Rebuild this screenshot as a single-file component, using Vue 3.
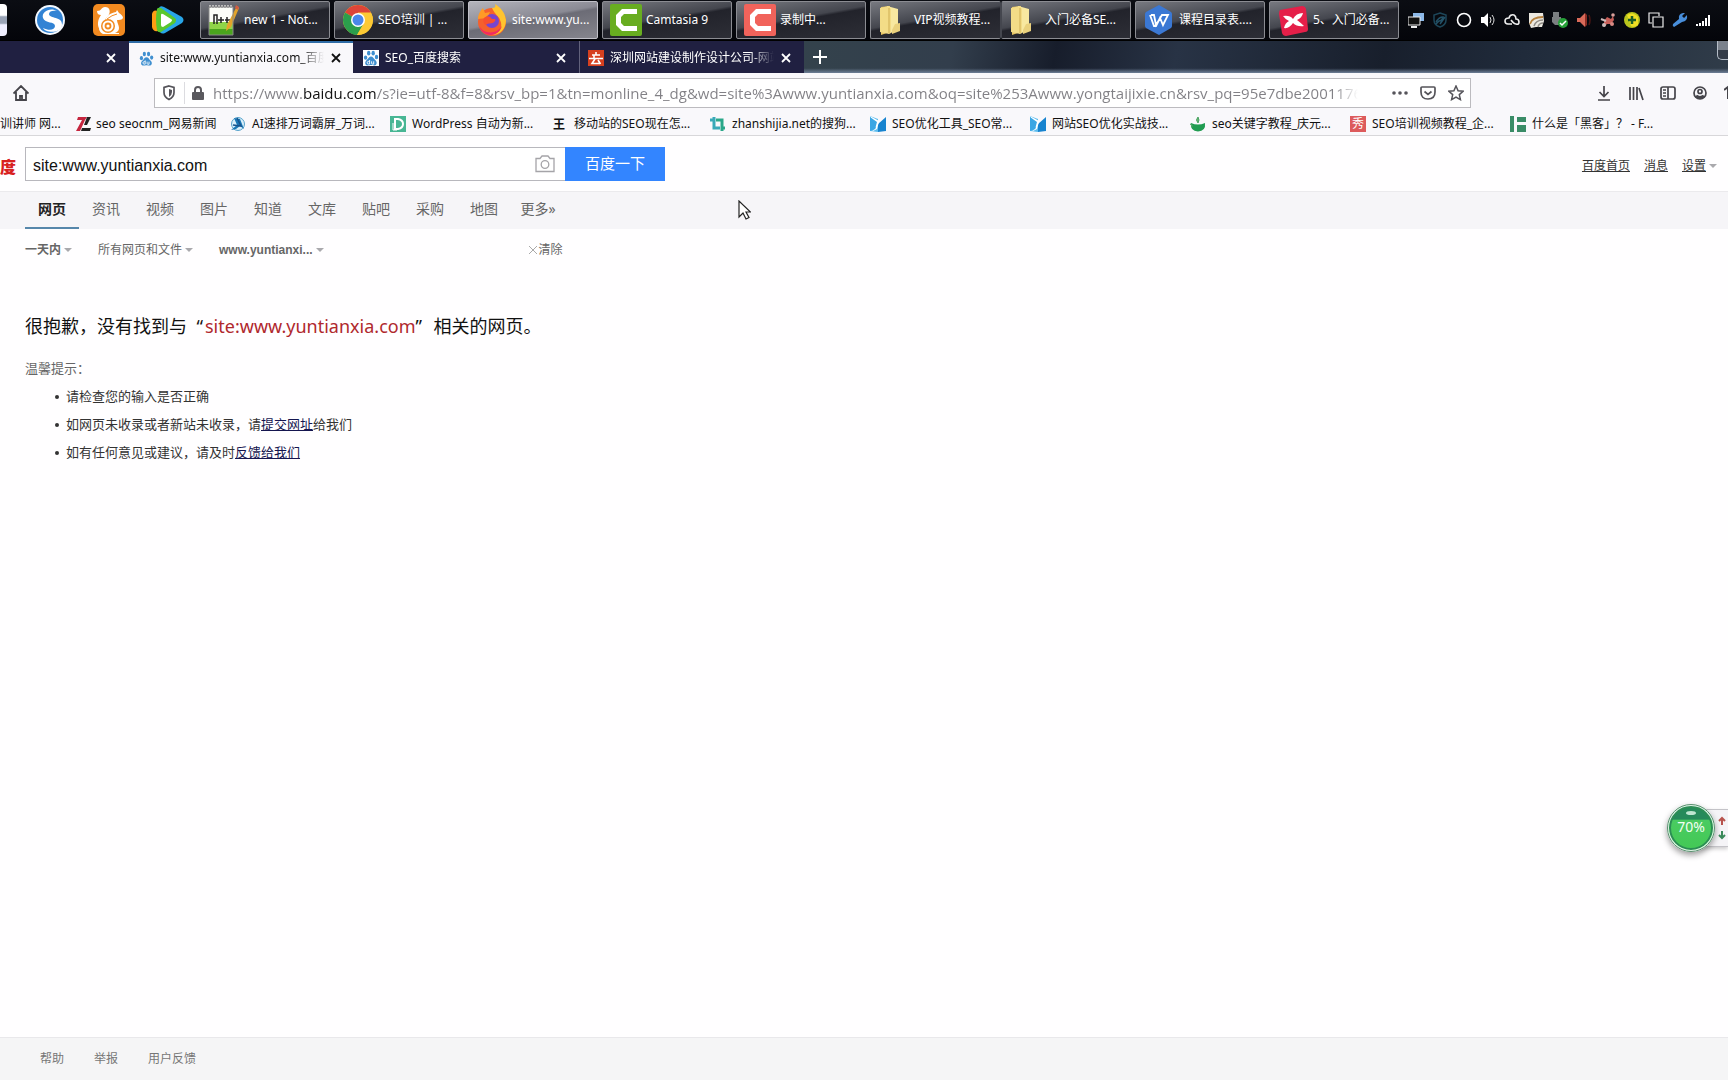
<script setup>
import { ref } from 'vue'

const query = ref('site:www.yuntianxia.com')
const address = ref(
  'https://www.baidu.com/s?ie=utf-8&f=8&rsv_bp=1&tn=monline_4_dg&wd=site%3Awww.yuntianxia.com&oq=site%253Awww.yongtaijixie.cn&rsv_pq=95e7dbe2001176a9&rsv_t'
)

const paw = `
  <ellipse cx="2.6" cy="7.6" rx="1.7" ry="2.2" fill="#3f8fd0"/>
  <ellipse cx="5.7" cy="3.2" rx="1.7" ry="2.4" fill="#3f8fd0"/>
  <ellipse cx="10.2" cy="3.2" rx="1.7" ry="2.4" fill="#3f8fd0"/>
  <ellipse cx="13.5" cy="7" rx="1.7" ry="2.2" fill="#3f8fd0"/>
  <path d="M8 6.6c2 0 2.600 2 4.200 3.400 2.400 2 1.800 5.400-1 5.500-1.400 0-2-.4-3.200-.4s-1.900.4-3.200.4c-3 0-3.400-3.600-1-5.500C5.400 8.600 6 6.600 8 6.600z" fill="#3f8fd0"/>
  <path d="M6.600 10v4H5.400q-1.200-.1-1.200-1.300t1.200-1.300h1.200M8.600 11.300v2q0 .8.800.8h1.300v-2.800" fill="none" stroke="#fff" stroke-width=".9"/>`

const folder = `
  <path d="M3 3l9-1v26l-9 3z" fill="#e6c565"/>
  <path d="M9 2l11 3v19l-7 5-4-2z" fill="#f8e8a0"/>
  <path d="M2 4l9-2 2 3v24l-2 1-9-2z" fill="#f3dc87"/>
  <path d="M11 4v25" stroke="#cfae52"/>
  <path d="M17 20l5-1v8l-8 3v-4z" fill="#ead17d"/>`

const launchers = [
  { name: '搜狗浏览器', art: `
    <circle cx="16" cy="16" r="15" fill="#f4f9ff"/>
    <circle cx="16" cy="16" r="13" fill="#3283d4"/>
    <path d="M23 7C17 3 7 7 9 14c2 6 12 3 12 8 0 4-6 5-12 2 2 5 18 6 19-3 1-9-13-6-13-11 0-3 4-4 8-3z" fill="#fff"/>` },
  { name: 'UC浏览器', art: `
    <rect width="32" height="32" rx="5" fill="#f28a20"/>
    <path d="M4 7c5 0 4-4 8-4 5 0 6 5 3 9-3 3-4 5-3 8l-4 7c-5-5-3-12 0-16-2 0-4-1-4-4z" fill="#fff"/>
    <path d="M12 17c1-5 5-8 11-9l1-2 2 3c2 1 4 3 4 5-1 2-4 2-6 2 0 3 2 5 2 8s-2 4-4 5h4v1H10c-4-2-5-6-3-9" fill="#fff"/>
    <circle cx="15" cy="22" r="7" fill="#f28a20"/><circle cx="15" cy="22" r="5.500" fill="#fff"/>
    <circle cx="15" cy="22" r="2.500" fill="#fff" stroke="#f28a20" stroke-width="1.800"/>
    <path d="M14 15q5-4 10-5" stroke="#f28a20" fill="none"/>` },
  { name: '腾讯视频', art: `
    <path d="M7 4Q8 1 12 3l18 10q3 3 0 6L13 29q-5 2-6-4z" fill="#28a5e8"/>
    <path d="M0 10q1-5 6-3l16 7q3 2 0 5L6 27q-5 1-6-4z" fill="#ff9d13"/>
    <path d="M5 5q1-2 4-1l14 10q2 2 0 5L9 28q-3 1-4-2-2-11 0-21z" fill="#5ac72e"/>
    <path d="M9 11q0-2 2-1l8 5q2 1 0 3l-8 5q-2 0-2-2z" fill="#fff"/>` }
]

const tasks = [
  { label: 'new 1 - Not...', art: `
    <path d="M1 3h24v28H1z" fill="#fbfdf8"/><path d="M1 18h24v13H1z" fill="#8fd448"/><path d="M1 25h24v6H1z" fill="#4aa51d"/>
    <path d="M1 2.500h24" stroke="#bbb" stroke-dasharray="2 1" stroke-width="3"/>
    <path d="M6 20v-9h3v9M13 13v6M10 16h6M19 13v6M17 16h5" fill="none" stroke="#222" stroke-width="1.500"/>
    <path d="M29 2L19 21l-1 6 5-4L31 4z" fill="#e3a42b"/><path d="M28 1l3 2-1 3-3-2z" fill="#d25b42"/>
    <path d="M1 3h24v28H1z" fill="none" stroke="#888"/>` },
  { label: 'SEO培训 | ...', art: `
    <circle cx="16" cy="16" r="15" fill="#fcc934"/>
    <path d="M16 16L3 8.500A15 15 0 0 1 29 8.500H16z" fill="#dd4437"/>
    <path d="M3 8.500A15 15 0 0 0 15 31l7-11.500L16 16z" fill="#2b9e4c"/>
    <path d="M16 9H29A15 15 0 0 1 15 31l7-12z" fill="#fcc934"/>
    <circle cx="16" cy="16" r="7" fill="#fff"/><circle cx="16" cy="16" r="5.500" fill="#4a87ea"/>` },
  { label: 'site:www.yu...', active: true, art: `
    <circle cx="16" cy="18" r="14" fill="#f5602d"/>
    <path d="M16 4C21 4 19 0 19 0c5 3 10 8 11 16 0 9-6 15-14 15 9-2 11-9 8-15-1-4-5-5-8-12z" fill="#ffc42e"/>
    <path d="M2 15C2 9 6 5 7 4l2 5 5-1-3 6z" fill="#ff9a26"/>
    <circle cx="16" cy="17" r="7" fill="#7845ce"/>
    <path d="M8 14c3-3 6-2 8 1 3 0 4 0 3 2-3 4-7 1-9 4-3-1-3-5-2-7z" fill="#f8502f"/>
    <path d="M3 22c4 7 16 10 23 0-4 12-19 12-23 0z" fill="#f22b63"/>` },
  { label: 'Camtasia 9', art: `
    <rect width="32" height="32" rx="2" fill="#68ad20"/>
    <path d="M27 5H12L6 11v10l6 6h15v-5H14l-3-3v-6l3-3h13z" fill="#fff"/>` },
  { label: '录制中...', art: `
    <rect width="32" height="32" rx="2" fill="#f1635b"/>
    <path d="M27 5H12L6 11v10l6 6h15v-5H14l-3-3v-6l3-3h13z" fill="#fff"/>` },
  { label: 'VIP视频教程...', joined: true, art: folder },
  { label: '入门必备SE...', art: folder },
  { label: '课程目录表....', art: `
    <path d="M16 1l12 7q1 1 1 2v12q0 1-1 2l-12 7L3 24q-1-1-1-2V10q0-1 1-2z" fill="#3b78d4"/>
    <path d="M8 11h3l2 10 6-10h6l-5 10-3-7-4 8h-2L7 11" fill="none" stroke="#fff" stroke-width="1.800"/>` },
  { label: '5、入门必备...', art: `
    <path d="M3 6l22-4q3 0 4 3l2 20q0 3-3 3L9 32q-3 0-4-3L2 10q0-3 1-4z" fill="#e51f49"/>
    <path d="M6 12q7-1 10 3 3-6 10-6-1 5-6 7 4 3 7 6-7 1-11-3-4 6-9 5 1-5 5-7-4-2-6-5z" fill="#fff"/>` }
]

const tray = [
  `<path d="M5 1h12v8H5z" fill="#8db9e8"/><path d="M0 5h12v8H0z" fill="#111" stroke="#eee"/><path d="M3 15h6" stroke="#eee" stroke-width="2"/>`,
  `<path d="M8 1l6 2v5q0 5-6 7-6-2-6-7V3z" fill="none" stroke="#1d4659" stroke-width="1.500"/><path d="M4 10q3-5 7-5-1 4-4 4l-3 3M8 12l5-7" fill="none" stroke="#235268" stroke-width="1.500"/>`,
  `<circle cx="8" cy="8" r="6.500" fill="none" stroke="#fff" stroke-width="1.600"/>`,
  `<path d="M1 5h3l4-4v14l-4-4H1z" fill="#fff"/><path d="M10 5q2 3 0 6M12 3q4 5 0 10" fill="none" stroke="#ddd"/>`,
  `<path d="M8 12H4q-3 0-3-3t4-3q1-4 5-3 2 1 2 4 3 0 3 3t-3 2q-2 0-5-4" fill="none" stroke="#eee" stroke-width="1.600"/>`,
  `<path d="M1 1h14l1 8-2 6-6 0-5 1-2-5z" fill="#ebe8df"/><path d="M2 12q2-7 13-7" fill="none" stroke="#b5813d" stroke-width="1.800"/><path d="M6 14q2-6 9-6M10 15q1-4 5-4" fill="none" stroke="#8e8a84" stroke-width="1.500"/>`,
  `<path d="M1 0h6v5h2v8H3l-3-3V5h1z" fill="#7b7f81"/><circle cx="11" cy="11" r="5" fill="#26a038"/><path d="M8 11l2 2 4-4" fill="none" stroke="#fff" stroke-width="1.500"/>`,
  `<path d="M1 6h3l5-5v14l-5-5H1z" fill="#da6a59"/><path d="M9 1l2 2v10l-2 2z" fill="#8c2d24"/><path d="M13 3q2 5 0 10" stroke="#4d1613" stroke-width="1.500" fill="none"/>`,
  `<path d="M4 9l3-4 4 2 2-3 1 4-3 4-4 0-3 3z" fill="#c85f59"/><circle cx="4" cy="13" r="2" fill="#cbb"/><circle cx="12" cy="12" r="2" fill="#d98a84"/><circle cx="13" cy="3" r="1.800" fill="#d9a09b"/><path d="M1 7l5 2" stroke="#cbb" stroke-width="2"/>`,
  `<circle cx="8" cy="8" r="8" fill="#b9c51d"/><path d="M3 3q6-4 11 2v8q-4 3-7 1z" fill="#f0df24"/><path d="M8 4v8M4 8h8" stroke="#1c5f25" stroke-width="2.500"/>`,
  `<path d="M4 11H1V1h10v3M5 5h10v10H5z" fill="none" stroke="#eee" stroke-width="1.200"/>`,
  `<path d="M2 15q-2-1-1-3l6-5q-1-5 4-6l2 0-3 3 2 2 3-3q1 6-5 7z" fill="#488edb"/>`,
  `<path d="M1 14v-2M4 14v-3M7 14V9M10 14V6M13 14V3" stroke="#fff" stroke-width="2"/>`
]

const swoosh = `<path d="M0 0l8 3v13l-8-1z" fill="#5cbcee"/><path d="M8 8l8-7v14l-8 1z" fill="#1783cf"/><path d="M0 0l9 5 1-3-3 11-6 3 5-4z" fill="#fff"/><path d="M0 1l7 5-2 7-5 2z" fill="#3ba6e4"/>`

const bookmarks = [
  { label: 'seo seocnm_网易新闻', art: `<path d="M2 1h9L9 4 4 15H0L6 4H1z" fill="#c5263f"/><path d="M11 1h4l-4 8H8zM6 12h9l-1 3H5z" fill="#222"/>` },
  { label: 'AI速排万词霸屏_万词...', art: `<circle cx="8" cy="8" r="6.500" fill="#d9effa" stroke="#55a2cb"/><path d="M4 2l6 1 4 10-4-3-4 3-5 1 6-5z" fill="#1977b5"/><path d="M3 9l8 1-4-8" fill="none" stroke="#17538d" stroke-width="1.500"/>` },
  { label: 'WordPress 自动为新...', art: `<path d="M0 0h16v16H0z" fill="#48b694"/><path d="M5 3h3q5 1 5 5t-5 5H5z" fill="none" stroke="#fff" stroke-width="2"/><path d="M3 7v7h4" stroke="#fff" fill="none"/>` },
  { label: '移动站的SEO现在怎...', glyph: '王' },
  { label: 'zhanshijia.net的搜狗...', art: `<path d="M4 1v11h6M0 4h4" fill="none" stroke="#38a9b8" stroke-width="3"/><path d="M6 4h6v11M12 12h3" fill="none" stroke="#2aa789" stroke-width="3"/>` },
  { label: 'SEO优化工具_SEO常...', art: swoosh },
  { label: '网站SEO优化实战技...', art: swoosh },
  { label: 'seo关键字教程_庆元...', art: `<path d="M1 7q7 3 14 0 1 8-7 8.500Q0 15 1 7z" fill="#219c51"/><path d="M0 8q3 0 2 3M8 7q-3-3 0-6 2 3 0 6z" fill="#6cb77a" stroke="#4ba463"/>` },
  { label: 'SEO培训视频教程_企...', box: '秀' },
  { label: '什么是「黑客」？ - F...', art: `<path d="M0 0h4v16H0zM7 1h9v5H7zM7 9h9v7H7z" fill="#3a8c67"/>` }
]

const channels = ['网页', '资讯', '视频', '图片', '知道', '文库', '贴吧', '采购', '地图', '更多»']
const toolbar = [
  { name: '下载', art: '<path d="M8 1v10M3.500 7L8 11.500 12.500 7M2 15h12"/>' },
  { name: '书签库', art: '<path d="M2 2v13M5.500 2v13M9 2v13M11 3l4 12"/>' },
  { name: '侧栏', art: '<rect x="1" y="2" width="14" height="12" rx="2"/><path d="M8 2v12M3 5h3M3 8h3M3 11h3"/>' },
  { name: '帐户', art: '<circle cx="8" cy="8" r="6"/><circle cx="8" cy="6.500" r="2"/><path d="M4 11q4 3 8 0" stroke-width="3"/>' }
]
</script>

<template>
  <div class="screen">
    <header class="taskbar">
      <div class="edge"><span></span></div>
      <button v-for="l in launchers" :key="l.name" class="launcher" :aria-label="l.name">
        <svg viewBox="0 0 32 32" width="32" height="32" v-html="l.art"></svg>
      </button>
      <div class="tasks">
        <button v-for="t in tasks" :key="t.label" class="task" :class="{ active: t.active, joined: t.joined }">
          <svg viewBox="0 0 32 32" width="32" height="32" v-html="t.art"></svg>
          <span>{{ t.label }}</span>
        </button>
      </div>
      <div class="tray">
        <svg v-for="(art, i) in tray" :key="i" viewBox="0 0 16 16" width="16" height="16" v-html="art"></svg>
      </div>
    </header>

    <div class="tabstrip">
      <div class="tab first">
        <button class="close" aria-label="关闭"><svg viewBox="0 0 12 12" width="12" height="12"><path d="M2 2l8 8M10 2l-8 8" /></svg></button>
      </div>
      <div class="tab current">
        <svg viewBox="0 0 16 16" width="15" height="15" v-html="paw"></svg>
        <span class="title">site:www.yuntianxia.com_百度</span>
        <button class="close" aria-label="关闭"><svg viewBox="0 0 12 12" width="12" height="12"><path d="M2 2l8 8M10 2l-8 8" /></svg></button>
      </div>
      <div class="tab">
        <svg class="tile" viewBox="0 0 16 16" width="16" height="16" v-html="paw"></svg>
        <span class="title">SEO_百度搜索</span>
        <button class="close" aria-label="关闭"><svg viewBox="0 0 12 12" width="12" height="12"><path d="M2 2l8 8M10 2l-8 8" /></svg></button>
      </div>
      <div class="tab ruled">
        <svg viewBox="0 0 16 16" width="16" height="16">
          <path d="M0 0h16v16H0z" fill="#d6401f" />
          <path d="M8 2v3M4 5h8M6 5v3M1 8.500h14M7 9l-3 4.500h8M10 10l2.500 4" fill="none" stroke="#fff" stroke-width="1.600" />
        </svg>
        <span class="title">深圳网站建设制作设计公司-网站</span>
        <button class="close" aria-label="关闭"><svg viewBox="0 0 12 12" width="12" height="12"><path d="M2 2l8 8M10 2l-8 8" /></svg></button>
      </div>
      <button class="newtab" aria-label="新标签页">
        <svg viewBox="0 0 16 16" width="16" height="16"><path d="M8 1v14M1 8h14" stroke="#fff" stroke-width="2" /></svg>
      </button>
      <span class="windowbtn"></span>
    </div>

    <div class="navbar">
      <button class="home" aria-label="主页">
        <svg viewBox="0 0 16 16" width="16" height="16" fill="none" stroke="#45444a" stroke-width="1.800">
          <path d="M.5 8.500L8 1l7.500 7.500M3 7v8h10V7M7 15v-4h2v4" />
        </svg>
      </button>
      <div class="urlbar">
        <svg viewBox="0 0 14 16" width="14" height="16">
          <path d="M7 1l5 1.500v5Q12 12 7 14.500 2 12 2 7.500v-5z" fill="none" stroke="#55545a" stroke-width="1.700" />
          <path d="M7 4v8q3-2 3-5V5z" fill="#55545a" />
        </svg>
        <span class="split"></span>
        <svg viewBox="0 0 14 16" width="14" height="16">
          <rect x="1" y="7" width="12" height="8" rx="1" fill="#5a595e" />
          <path d="M4 8V5q0-3 3-3t3 3v3" fill="none" stroke="#5a595e" stroke-width="2" />
        </svg>
        <input v-model="address" class="address" aria-label="地址" spellcheck="false" />
        <div class="actions">
          <svg viewBox="0 0 16 16" width="16" height="16" fill="#55545a"><circle cx="2" cy="8" r="1.800" /><circle cx="8" cy="8" r="1.800" /><circle cx="14" cy="8" r="1.800" /></svg>
          <svg viewBox="0 0 16 16" width="16" height="16" fill="none" stroke="#55545a" stroke-width="1.700"><path d="M2 2h12q1 0 1 1v4q0 7-7 7T1 7V3q0-1 1-1zM4.500 6.500L8 9.500l3.500-3" /></svg>
          <svg viewBox="0 0 16 16" width="16" height="16" fill="none" stroke="#55545a" stroke-width="1.500"><path d="M8 1l2.100 4.700 5 .5-3.800 3.400 1.100 5L8 12l-4.400 2.600 1.100-5L.9 6.200l5-.5z" /></svg>
        </div>
      </div>
      <div class="tools">
        <button v-for="b in toolbar" :key="b.name" :aria-label="b.name">
          <svg viewBox="0 0 16 16" width="16" height="16" fill="none" stroke="#45444a" stroke-width="1.700" v-html="b.art"></svg>
        </button>
        <svg viewBox="0 0 4 16" width="4" height="16" fill="none" stroke="#45444a" stroke-width="2"><path d="M0 5l4-3v12" /></svg>
      </div>
    </div>

    <nav class="bookmarks" aria-label="书签">
      <a href="#" class="cut">训讲师 网...</a>
      <a v-for="b in bookmarks" :key="b.label" href="#">
        <b v-if="b.glyph" class="glyph">{{ b.glyph }}</b>
        <span v-else-if="b.box" class="box">{{ b.box }}</span>
        <svg v-else viewBox="0 0 16 16" width="16" height="16" v-html="b.art"></svg>
        <span>{{ b.label }}</span>
      </a>
    </nav>

    <main class="page">
      <form class="search" @submit.prevent>
        <div class="logo">度</div>
        <div class="field">
          <input v-model="query" aria-label="搜索" spellcheck="false" />
          <svg viewBox="0 0 20 18" width="20" height="18" fill="none" stroke="#a5a4a8" stroke-width="1.300"><path d="M1 3.500h4L7 1h6l2 2.500h4v13H1z" /><circle cx="10" cy="9.500" r="3.800" /></svg>
        </div>
        <button class="submit">百度一下</button>
        <div class="account">
          <a href="#">百度首页</a><a href="#">消息</a><span class="drop"><a href="#">设置</a><i class="caret"></i></span>
        </div>
      </form>

      <nav class="channels" aria-label="频道">
        <a v-for="(c, i) in channels" :key="c" href="#" :class="{ on: i === 0 }">{{ c }}</a>
        <svg class="pointer" viewBox="0 0 13 20" width="13" height="20"><path d="M1 1v16l4-4 3 6 3-1.500-3-5.500h4.500z" fill="#fff" stroke="#222" stroke-width="1.200" /></svg>
      </nav>

      <div class="filters">
        <button class="strong">一天内<i class="caret"></i></button>
        <button>所有网页和文件<i class="caret"></i></button>
        <button class="strong">www.yuntianxi...<i class="caret"></i></button>
        <button class="clear">
          <svg viewBox="0 0 10 10" width="10" height="10"><path d="M1 1l8 8M9 1L1 9" stroke="#aaa" /></svg>清除
        </button>
      </div>

      <section class="empty">
        <h1>很抱歉，没有找到与<span class="quote open">“</span><em>site:www.yuntianxia.com</em><span class="quote">”</span>相关的网页。</h1>
        <p>温馨提示：</p>
        <ul>
          <li>请检查您的输入是否正确</li>
          <li>如网页未收录或者新站未收录，请<a href="#">提交网址</a>给我们</li>
          <li>如有任何意见或建议，请及时<a href="#">反馈给我们</a></li>
        </ul>
      </section>
    </main>

    <footer class="foot">
      <a href="#">帮助</a><a href="#">举报</a><a href="#">用户反馈</a>
    </footer>

    <aside class="meter">
      <div class="arrows">
        <svg viewBox="0 0 8 24" width="8" height="24" fill="none" stroke-width="2"><path d="M4 9V2M1 5l3-3 3 3" stroke="#b8544e" /><path d="M4 15v7M1 19l3 3 3-3" stroke="#3b8a5b" /></svg>
      </div>
      <div class="ball"><i></i><span>70%</span></div>
    </aside>
  </div>
</template>

<style>
body {
  margin: 0;
  overflow-x: hidden;
}
</style>

<style scoped>
.screen {
  position: relative;
  display: flex;
  flex-direction: column;
  min-height: 100vh;
  overflow: hidden;
  background: #fffeff;
  color: #333;
  font: 12px/16px "Noto Sans", "Noto Sans CJK SC", sans-serif;
}
button {
  padding: 0;
  border: 0;
  background: none;
  color: inherit;
  font: inherit;
}
input {
  font: inherit;
}
svg {
  flex: none;
}
.taskbar {
  display: flex;
  height: 40px;
  background: linear-gradient(#0b0d13, #04050a);
}
.edge {
  flex: none;
  display: flex;
  align-items: center;
  width: 20px;
}
.edge span {
  width: 7px;
  height: 32px;
  border-radius: 0 4px 4px 0;
  background: linear-gradient(#fff 35%, #99a3b5 40% 60%, #eef 65%);
}
.launcher {
  flex: none;
  display: grid;
  place-items: center;
  width: 59px;
}
.tasks {
  flex: none;
  display: flex;
  gap: 4px;
  margin-left: 3px;
  padding: 1px 0;
}
.task {
  flex: none;
  display: flex;
  align-items: center;
  gap: 4px;
  width: 130px;
  padding-left: 7px;
  box-sizing: border-box;
  border: 1px solid #8b8c92;
  border-radius: 2px;
  background: linear-gradient(170deg, #777980 0%, #44464e 45%, #22232b 50%, #2d2e36 100%);
  color: #fff;
  white-space: nowrap;
}
.task.active {
  border-color: #c0c0c8;
  background: linear-gradient(170deg, #b4b4bc 0%, #8a8a94 45%, #6c6c76 50%, #85858d 100%);
}
.task.joined {
  margin-right: -4px;
  width: 131px;
  border-right-color: #44464e;
}
.task.joined + .task {
  border-left-color: #44464e;
}
.tray {
  display: flex;
  align-items: center;
  gap: 8px;
  padding-left: 9px;
}
.tabstrip {
  display: flex;
  height: 33px;
  border-top: 1px solid #000;
  box-sizing: border-box;
  background: linear-gradient(transparent 85%, #6e7f97), linear-gradient(100deg, #34434c 45%, #323e4c 55%, #171d2b 61%, #283345 68%, #181f2c 80%, #202b3b 88%, #303c49);
}
.tab {
  flex: none;
  display: flex;
  align-items: center;
  gap: 6px;
  width: 226px;
  padding: 2px 12px 0 10px;
  box-sizing: border-box;
  background: #202041;
  color: #fff;
}
.first {
  justify-content: flex-end;
  width: 129px;
}
.current {
  width: 224px;
  padding-right: 11px;
  border-top: 2px solid #2f6ca6;
  padding-top: 0;
  background: #f9f8fb;
  color: #111;
}
.ruled {
  width: 225px;
  padding-left: 8px;
  border-left: 1px solid #62627c;
}
.tile {
  background: #fff;
}
.title {
  flex: 1;
  overflow: hidden;
  white-space: nowrap;
  mask-image: linear-gradient(to right, #000 calc(100% - 24px), transparent);
}
.close {
  display: flex;
}
.close path {
  stroke: currentColor;
  stroke-width: 1.800;
}
.newtab {
  display: grid;
  place-items: center;
  width: 32px;
}
.windowbtn {
  width: 10px;
  height: 18px;
  margin-left: auto;
  border: 1px solid #b6bec8;
  border-width: 0 0 1px 1px;
  border-radius: 0 0 0 5px;
  background: linear-gradient(#7b828c 50%, #343c48 50%);
}
.navbar {
  display: flex;
  align-items: center;
  height: 40px;
  background: #f9f8fb;
}
.home {
  display: flex;
  margin-left: 13px;
}
.urlbar {
  flex: 1;
  display: flex;
  align-items: center;
  gap: 8px;
  height: 30px;
  margin-left: 125px;
  padding: 0 6px 0 7px;
  box-sizing: border-box;
  border: 1px solid #bcbbbf;
  background: #fff;
}
.split {
  width: 1px;
  height: 22px;
  margin-right: -2px;
  background: #dcdce0;
}
.address {
  flex: 1;
  min-width: 0;
  margin: 0 26px 0 0;
  padding: 0;
  border: 0;
  outline: 0;
  background: linear-gradient(to right, #818085 90px, #111 90px 164px, #818085 164px calc(100% - 24px), transparent);
  background-clip: text;
  -webkit-background-clip: text;
  color: transparent;
  font: 15px/24px "Open Sans", "Noto Sans", sans-serif;
}
.actions {
  display: flex;
  gap: 12px;
}
.tools {
  flex: none;
  display: flex;
  align-items: center;
  gap: 16px;
  margin-left: 125px;
}
.tools button {
  display: flex;
}
.bookmarks {
  display: flex;
  height: 22px;
  border-bottom: 1px solid #d8d7da;
  background: #f9f8fb;
}
.bookmarks a {
  flex: none;
  display: flex;
  align-items: center;
  gap: 6px;
  width: 160px;
  color: #111;
  text-decoration: none;
  white-space: nowrap;
}
.bookmarks .cut {
  width: 76px;
}
.bookmarks .cut + a {
  gap: 4px;
  width: 154px;
}
.glyph,
.box {
  width: 16px;
  text-align: center;
}
.glyph {
  padding: 0 1px;
  font-family: "Noto Sans CJK SC", sans-serif;
}
.box {
  background: #dd5b5c;
  color: #fff;
}
.page {
  flex: 1;
}
.search {
  display: flex;
  align-items: center;
  height: 55px;
}
.logo {
  flex: none;
  width: 25px;
  padding-top: 4px;
  box-sizing: border-box;
  color: #d8211f;
  font: 900 16px/24px "Noto Sans CJK SC", sans-serif;
}
.field {
  flex: none;
  display: flex;
  align-items: center;
  width: 540px;
  height: 34px;
  padding: 0 10px 0 7px;
  box-sizing: border-box;
  border: 1px solid #b8b7bd;
  border-right: 0;
  background: #fff;
}
.field input {
  flex: 1;
  padding: 4px 0 0;
  border: 0;
  outline: 0;
  background: none;
  color: #111;
  font: 16px/22px "Liberation Sans", Arial, sans-serif;
}
.submit {
  flex: none;
  width: 100px;
  height: 34px;
  padding-bottom: 2px;
  background: #3385ff;
  color: #fff;
  font-size: 15px;
}
.account {
  display: flex;
  gap: 14px;
  margin-left: auto;
  padding: 4px 11px 0 0;
}
.account a {
  color: #333;
}
.drop {
  display: flex;
  align-items: center;
  gap: 3px;
}
.caret {
  display: inline-block;
  border: 4px solid transparent;
  border-top-color: #aaa9ad;
  border-bottom: 0;
}
.channels {
  position: relative;
  display: flex;
  height: 38px;
  padding-left: 25px;
  box-sizing: border-box;
  border-top: 1px solid #ebeaed;
  background: #f6f5f8;
  font-size: 14px;
  line-height: 34px;
}
.channels a {
  width: 54px;
  color: #666;
  text-align: center;
  text-decoration: none;
  white-space: nowrap;
}
.channels .on {
  border-bottom: 2px solid #5687ab;
  color: #222;
  font-weight: 700;
}
.pointer {
  position: absolute;
  left: 738px;
  top: 8px;
}
.filters {
  display: flex;
  align-items: center;
  gap: 26px;
  height: 42px;
  padding-left: 25px;
  color: #666;
}
.filters button {
  display: flex;
  align-items: center;
  gap: 3px;
}
.filters .strong {
  font-family: "Liberation Sans", "Noto Sans CJK SC", sans-serif;
  font-weight: 700;
}
.filters .clear {
  margin-left: 178px;
  gap: 1px;
}
.empty {
  padding: 39px 25px 0;
}
h1 {
  margin: 0;
  color: #111;
  font-size: 18px;
  font-weight: 400;
  line-height: 32px;
}
em {
  color: #b0282d;
  font-style: normal;
}
.quote {
  display: inline-block;
  width: 18px;
}
.open {
  padding-right: 2px;
  box-sizing: border-box;
  text-align: right;
}
.empty p {
  margin: 17px 0 0;
  color: #666;
  font-size: 13px;
  line-height: 18px;
}
ul {
  margin: 5px 0 0;
  padding-left: 30px;
  list-style: none;
  font-size: 13px;
  line-height: 28px;
}
li::before {
  content: "";
  display: inline-block;
  width: 4px;
  height: 4px;
  margin-right: 7px;
  border-radius: 50%;
  background: #333;
  vertical-align: 2px;
}
ul a {
  color: #15154f;
}
.foot {
  display: flex;
  gap: 30px;
  padding: 13px 40px;
  border-top: 1px solid #e9e8eb;
  background: #f5f5f6;
}
.foot a {
  color: #777;
  text-decoration: none;
}
.meter {
  position: absolute;
  right: 0;
  top: 804px;
  display: flex;
  align-items: center;
  width: 61px;
  height: 48px;
}
.arrows {
  display: flex;
  align-items: center;
  justify-content: flex-end;
  width: 31px;
  height: 38px;
  margin-left: auto;
  padding-right: 2px;
  box-sizing: border-box;
  border: 1px solid #c4c3c8;
  border-right: 0;
  background: #f5f4f7;
  box-shadow: 0 2px 4px #0003;
}
.ball {
  position: absolute;
  left: 0;
  display: grid;
  place-items: center;
  width: 48px;
  height: 48px;
  padding-bottom: 2px;
  box-sizing: border-box;
  border: 2px solid #dff5e6;
  border-radius: 50%;
  outline: 1px solid #5b8e70;
  outline-offset: -1px;
  background: linear-gradient(#268a5b 30%, #4acb61 32%, #43c955);
  box-shadow: inset 0 0 0 2px #2c8d55, 0 3px 6px #0006;
  color: #f2fff4;
  font-size: 14px;
}
.ball i {
  position: absolute;
  top: 5px;
  width: 10px;
  height: 4px;
  border-radius: 50%;
  background: #bfe5d1;
}
</style>
